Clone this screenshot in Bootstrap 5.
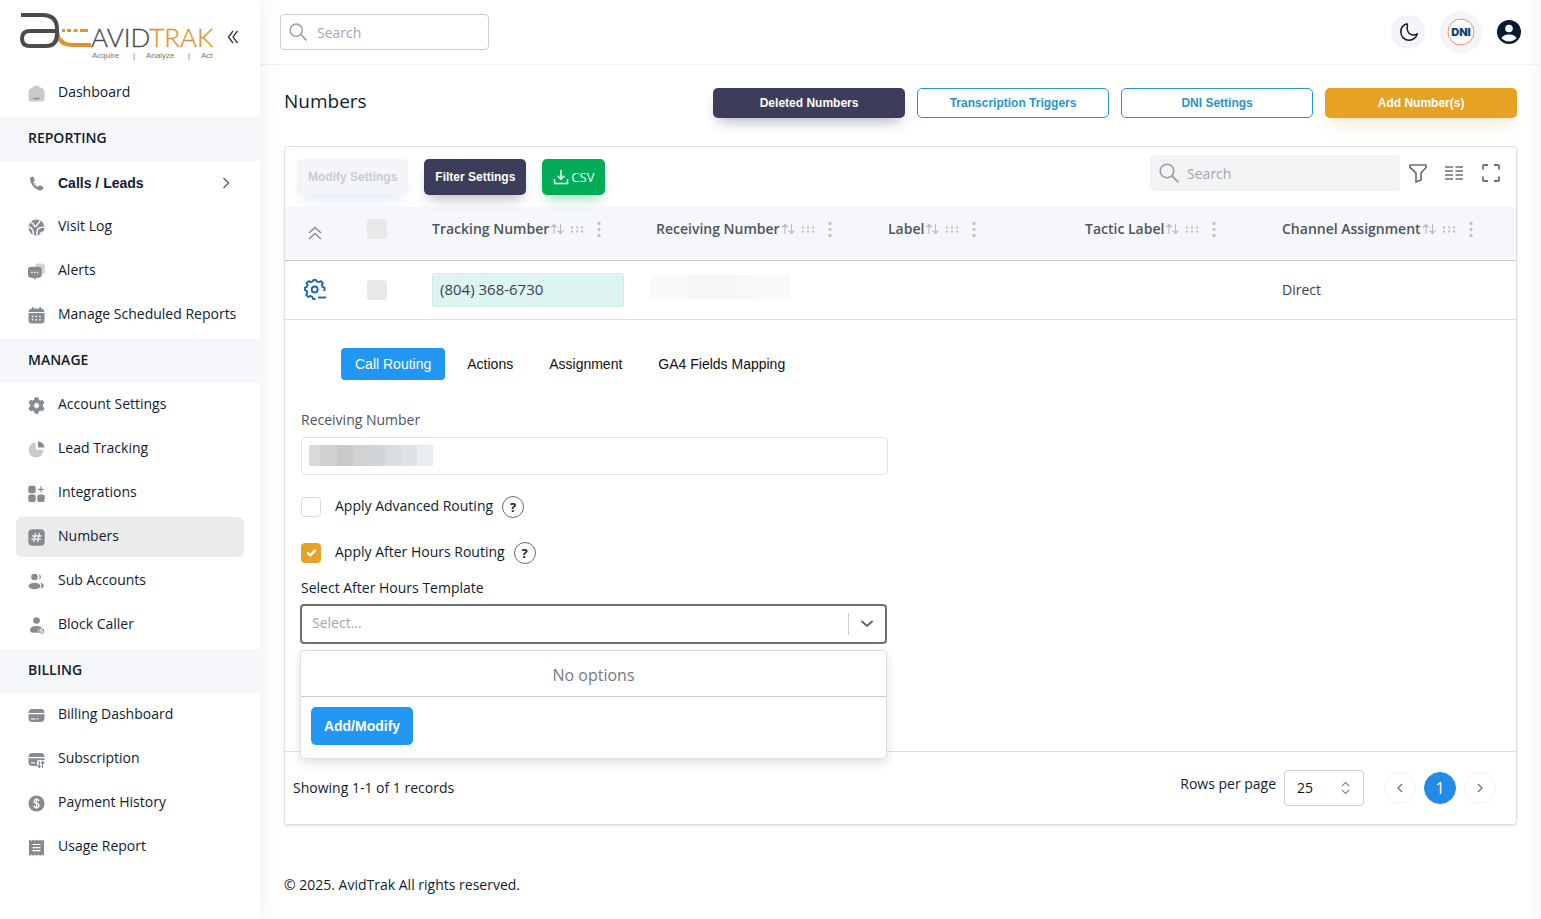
<!DOCTYPE html>
<html lang="en">
<head>
<meta charset="utf-8">
<meta name="viewport" content="width=device-width, initial-scale=1">
<title>AvidTrak - Numbers</title>
<link href="https://cdn.jsdelivr.net/npm/bootstrap@5.3.0/dist/css/bootstrap.min.css" rel="stylesheet">
<style>
  :root { --ui: "Open Sans", "Noto Sans", sans-serif; --arial: "Liberation Sans", Arial, sans-serif; --ink: #111c2d; --icon: #868b93; --amber: #e8a223; --navy: #3b3d5b; --blue: #2196f3; --line: #dcdee2; }
  body { font-family: var(--ui); font-size: 14px; line-height: 20px; color: var(--ink); background: #fff; }
  svg { display: block; flex: none; }
  .sidebar { width: 260px; box-shadow: 0 0 24px rgba(60, 60, 130, .09); z-index: 2; }
  .content-col { min-width: 0; box-shadow: inset -16px 0 16px -16px rgba(60, 60, 130, .09); }
  .brand-row { height: 71px; padding: 9px 20px 0 20px; }
  .collapse-btn { margin-top: 20px; }
  .side-title { height: 44px; padding: 0 28px 2px; background: #f6f7fb; font-size: 14px; font-weight: 600; display: flex; align-items: center; margin: 0; }
  .side-nav { padding-bottom: 2px; }
  .side-nav .nav-link { height: 40px; margin: 2px 16px; padding: 0 12px; color: var(--ink); border-radius: 6px; display: flex; align-items: center; gap: 13px; white-space: nowrap; }
  .side-nav .nav-link span { padding-bottom: 2px; }
  .side-nav .nav-link.active { background: #ebebeb; }
  .side-nav svg.ico { color: var(--icon); width: 17px; height: 17px; }
  .has-sub { font-family: var(--arial); font-weight: 700; }
  .topbar { height: 65px; border-bottom: 1px solid #f0f1f4; padding: 0 20px; }
  .top-tools { gap: 15px; }
  .search-wrap { position: relative; }
  .search-wrap svg { position: absolute; left: 9px; top: 50%; translate: 0 -50%; color: #9a9da3; }
  .form-control, .form-control:focus { font-size: 14px; line-height: 20px; box-shadow: none; }
  .form-control::placeholder { color: #a3a6ab; }
  .search-top { width: 209px; height: 36px; padding: 0 8px 0 36px; border-radius: 4px; border-color: #ccc; }
  .search-grid { width: 250px; height: 36px; padding: 0 8px 0 37px; border: 0; border-radius: 4px; background: #f1f3f5; }
  .round { border: 0; border-radius: 50%; background: #f5f5f9; display: flex; align-items: center; justify-content: center; padding: 0; color: var(--ink); width: 34px; height: 34px; }
  .round-lg { width: 42px; height: 42px; }
  .round-user { width: 24px; height: 24px; background: none; }
  .title-row { padding: 23px 0 28px; }
  .page-title { font-size: 19px; line-height: 26px; margin: 0; font-weight: 400; }
  .head-actions { gap: 12px; }
  .btn-a { --bs-btn-font-family: "Liberation Sans", Arial, sans-serif; font-size: 12px; font-weight: 700; line-height: 20px; padding: 0 10px; height: 36px; border-radius: 5px; }
  .btn-head { width: 192px; height: 30px; }
  .btn-navy, .btn-navy:hover { background: var(--navy); color: #fff; box-shadow: 0 8px 14px -5px rgba(59, 61, 91, .4); }
  .btn-line { border: 1px solid #2a93c9; color: #2a93c9; background: #fff; }
  .btn-amber { background: var(--amber); color: #fff; box-shadow: 0 10px 16px -5px rgba(232, 162, 35, .25); }
  .btn-green { background: #00ac55; color: #fff; font-size: 13px; font-weight: 500; gap: 2px; --bs-btn-font-family: "Open Sans", sans-serif; box-shadow: 0 8px 14px -5px rgba(0, 172, 85, .45); }
  .btn-pale, .btn-pale:disabled { background: #f3f5f8; color: #c9cdd3; border: 0; padding: 0 11px; opacity: 1; box-shadow: 0 10px 14px -5px rgba(33, 150, 243, .16); }
  .panel { border: 1px solid var(--line); border-radius: 4px; box-shadow: 0 1px 3px rgba(0, 0, 0, .1); background: #fff; }
  .toolbar { height: 60px; padding: 0 9px 0 12px; }
  .grid-tools { padding-bottom: 8px; }
  .tool { border: 0; background: none; padding: 9px; color: #6c7075; }
  .tool:last-child { padding-right: 6px; }
  .grid-table { table-layout: fixed; margin: 0; font-size: 14px; }
  .grid-table > :not(caption) > * > * { padding: 0 8px; vertical-align: middle; border-bottom: 1px solid #c6c8cd; }
  .grid-table > :not(caption) > * > .pick { padding: 0 15px 0 0; }
  .grid-table > thead > tr > th { height: 53px; background: #f6f7fa; padding-bottom: 9px; white-space: nowrap; }
  .grid-table > thead > tr > .pick { padding-bottom: 8px; }
  .grid-table > tbody > tr > td { height: 59px; border-bottom-color: var(--line); color: #3c424c; }
  .c-toggle { width: 60px; } .c-pick { width: 79px; } .c-track { width: 224px; } .c-recv { width: 232px; } .c-mid { width: 197px; }
  .th-line { display: flex; align-items: center; color: #babdc3; }
  .th-line b { font-weight: 600; color: #4d5560; }
  .form-check-input { width: 20px; height: 20px; margin: 0; border-radius: 4px; border: 1px solid #d8dadd; }
  .form-check-input:disabled { background: #e8e8e9; border: 0; opacity: 1; display: block; margin: 0 auto; }
  .form-check-input:checked { border-color: var(--amber); background-color: var(--amber); background-size: 16px; }
  .phone { width: 192px; height: 34px; font-size: 15px; line-height: 31px; padding: 0 7px; background: #def4f1; border: 1px solid #d0ebe7; border-radius: 3px; }
  .redact { display: flex; width: max-content; }
  .redact i { display: block; height: 24px; }
  .redact-cell { margin: -5px 0 0 -5px; }
  .detail { padding: 28px 16px 0; min-height: 432px; border-bottom: 1px solid var(--line); }
  .detail .nav { padding-left: 40px; gap: 8px; font-family: var(--arial); }
  .detail .nav-link { padding: 6px 14px; border-radius: 4px; color: #111; }
  .detail .nav-link.active { background: var(--blue); color: #fff; }
  .fields { max-width: 587px; }
  .recv-label { color: #4d5560; padding: 30px 0 7px; }
  .tpl-label { padding: 14px 0 6px; }
  .check-row { display: flex; align-items: center; margin-top: 24px; }
  .fake-input + .check-row { margin-top: 21px; }
  .check-row label { margin: 0 9px 0 14px; padding-bottom: 2px; }
  .fake-input { height: 38px; padding: 0 7px; border: 1px solid #e0e2e6; border-radius: 4px; position: relative; display: flex; align-items: center; }
  .fake-input input { position: absolute; inset: 0; width: 100%; border: 0; background: none; }
  .fake-input .redact i { height: 21px; }
  .help { width: 22px; height: 22px; border: 1px solid #6d6d6d; border-radius: 50%; background: #fff; padding: 0; font-size: 13px; line-height: 20px; font-weight: 700; color: #222; }
  .combo { height: 40px; border: 2px solid #6f7072; border-radius: 4px; margin: 0 1px 0 -1px; display: flex; align-items: center; position: relative; }
  .combo .form-control { border: 0; padding: 0 10px 2px; }
  .combo .sep { width: 1px; height: 22px; background: #ccc; flex: none; }
  .combo-arrow { border: 0; background: none; color: #666; padding: 0 11px; }
  .combo-menu { position: absolute; left: -2px; right: -2px; top: 44px; background: #fff; border: 1px solid var(--line); border-radius: 4px; box-shadow: 0 4px 11px rgba(0, 0, 0, .12); z-index: 3; }
  .combo-menu .none { height: 46px; padding-top: 12px; text-align: center; color: #777a80; border-bottom: 1px solid #c9cbce; font-size: 16px; line-height: 24px; }
  .btn-add, .btn-add:hover { background: var(--blue); color: #fff; font-size: 14px; width: 102px; height: 38px; padding: 0; margin: 10px 10px 13px; }
  .panel-foot { height: 72px; padding: 0 20px 0 8px; }
  .rows-select { width: 80px; height: 36px; padding: 0 12px; border: 1px solid #ccc; border-radius: 4px; appearance: none; color: #111; background: #fff url("data:image/svg+xml,%3Csvg xmlns='http://www.w3.org/2000/svg' width='9' height='14' fill='none' stroke='%23888' stroke-width='1.1'%3E%3Cpath d='M1 5l3.500-3.500L8 5M1 9l3.500 3.500L8 9'/%3E%3C/svg%3E") no-repeat right 13px center; }
  .pagination { gap: 8px; margin: 0 0 0 20px; }
  .pagination .page-item .page-link { width: 32px; height: 32px; border-radius: 50%; padding: 0; margin: 0; display: flex; align-items: center; justify-content: center; border: 1px solid #f0f0f0; color: #777; }
  .pagination .page-item.active .page-link { background: #228be6; color: #fff; border-color: #228be6; font-size: 16px; }
  .page-foot { padding-bottom: 24px; }
</style>
</head>
<body>
<svg width="0" height="0" class="position-absolute" aria-hidden="true">
  <symbol id="i-home" viewBox="0 0 17 17"><path fill="#c8cacf" d="M.5 6.500Q.5 5 2 4L7 .8Q8.500 0 10 .8L15 4q1.500 1 1.500 2.500V14a2.500 2.500 0 0 1-2.500 2.500H3A2.500 2.500 0 0 1 .5 14z"/><path fill="currentColor" d="M5.500 12.800h6v1.500h-6z"/></symbol>
  <symbol id="i-phone" viewBox="0 0 17 17"><path fill="currentColor" d="M2 3.500C2 2.500 3.500 1.300 4.600 1.500 6 2 7 5 6.500 6c-.5 1-1.200 1-1 1.700.5 1.500 2.200 3.300 3.800 3.900.8.200 1-.6 1.900-1.100 1.200-.5 4.200.9 4.300 2.200 0 1.300-1.500 2.600-3 2.700C8 15.600 2 9.500 2 3.500z"/><path fill="#c8cacf" d="M5.500 8c.8-1 2 0 2.500 1.500s2 2 1.300 2.300C7.500 11.500 5.500 9.500 5.500 8z"/></symbol>
  <symbol id="i-globe" viewBox="0 0 17 17"><circle cx="8.500" cy="8.500" r="8" fill="currentColor"/><path fill="none" stroke="#fff" stroke-width="1.400" d="M3 2.500c0 2 2.500 1.500 3 3.500s1.500 2 2.300.8S11 4.500 12 1.500M.5 8c2 0 3 1 4 3s.5 3 1 5.500M16.500 8.200c-3-.4-5 .2-6.500 1.800s0 2.500-1 3.500.5 2 0 3M12 16c0-2 .5-2.500 4-3"/></symbol>
  <symbol id="i-chat" viewBox="0 0 18 17"><path fill="#d3d5d9" d="M8 0h6.500A3.500 3.500 0 0 1 18 3.500V8a3.500 3.500 0 0 1-3.500 3.500H8z"/><path fill="currentColor" d="M3 3.500h8.500a3 3 0 0 1 3 3v5.500a3 3 0 0 1-3 3H9l-2 2-2-2H3a3 3 0 0 1-3-3V6.500a3 3 0 0 1 3-3z"/><path stroke="#fff" stroke-width="1.500" stroke-dasharray="1.500 1.500" d="M3.400 9.500h8"/></symbol>
  <symbol id="i-cal" viewBox="0 0 17 17"><path fill="currentColor" d="M4 0h1.500v1.500h6V0H13v1.600q3 .2 3.500 3.400H.500Q1 1.800 4 1.600zM.500 6h16v7a3.500 3.500 0 0 1-3.500 3.500H4A3.500 3.500 0 0 1 .500 13z"/><path stroke="#fff" stroke-width="1.500" stroke-dasharray="1.500 2.200" d="M3.800 9.500h9.500M3.800 12.800h9.500"/></symbol>
  <symbol id="i-gear" viewBox="0 0 17 17"><path fill="currentColor" stroke="currentColor" stroke-width=".8" stroke-linejoin="round" fill-rule="evenodd" d="M7 .7h3l.6 2.300 1.700 1 2.300-.7 1.500 2.700L14.500 7.500v2l1.600 1.700-1.500 2.700-2.300-.7-1.700 1-.6 2.100H7l-.6-2.100-1.700-1-2.300.7-1.500-2.700 1.600-1.700v-2L.9 6l1.500-2.700 2.300.7 1.700-1zM8.500 5.600a2.900 2.900 0 1 0 0 5.800 2.900 2.900 0 0 0 0-5.800z"/></symbol>
  <symbol id="i-pie" viewBox="0 0 17 17"><path fill="#c8cacf" d="M7.500 1.500v6.200q0 1.300 1.300 1.300H15.500a7.500 7.500 0 1 1-8-7.500z"/><path fill="currentColor" d="M10 .5a6.500 6.500 0 0 1 6.500 6H11q-1 0-1-1z"/></symbol>
  <symbol id="i-apps" viewBox="0 0 17 17"><g fill="currentColor"><rect x=".3" y=".8" width="7.400" height="7.400" rx="2"/><rect x=".3" y="9.600" width="7.400" height="7.400" rx="2"/><rect x="9.300" y="9.600" width="7.400" height="7.400" rx="2"/></g><path stroke="currentColor" stroke-width="1.200" d="M13 1.300v6M10 4.300h6"/></symbol>
  <symbol id="i-hash" viewBox="0 0 17 17"><rect x=".3" y=".3" width="16.400" height="16.400" rx="4" fill="currentColor"/><path stroke="#eee" stroke-width="1.300" d="M7.700 4L5.700 13M11.500 4l-2 9M4 7h9.500M3.500 10.200H13"/></symbol>
  <symbol id="i-users" viewBox="0 0 17 17"><g fill="currentColor"><circle cx="6.500" cy="4" r="3.300"/><ellipse cx="6.500" cy="13" rx="6" ry="3.300"/><path d="M11 1.300a2.700 2.700 0 0 1 0 5.200q1.300-2.600 0-5.200zM12.500 10c4.500.5 4.500 5 0 5.500q2-2.700 0-5.500z"/></g></symbol>
  <symbol id="i-block" viewBox="0 0 17 17"><g fill="currentColor"><circle cx="8.500" cy="3.500" r="3.300"/><path d="M8.500 9c3 0 5 1 5.700 1.800-3 0-4.700 2.500-3.600 5H5c-2 0-3-1.300-3-2.800C2 10.500 5 9 8.500 9z"/></g><circle cx="13.500" cy="14" r="2.300" fill="none" stroke="currentColor"/><path stroke="currentColor" d="M12 15.500l3-3"/></symbol>
  <symbol id="i-card" viewBox="0 0 17 17"><path fill="currentColor" d="M.5 6q0-4 4-4h8q4 0 4 4zM.5 7.200h16V11q0 4-4 4h-8q-4 0-4-4z"/><path stroke="#fff" stroke-width="1.200" d="M3 12h4.500M8.500 12h2"/></symbol>
  <symbol id="i-card2" viewBox="0 0 17 17"><path fill="currentColor" d="M.5 6q0-4 4-4h8q4 0 4 4zM.5 7.200h16V9H11q-2 0-2 2v4H4.500q-4 0-4-4z"/><path stroke="#fff" stroke-width="1.200" d="M3 12h4"/><path fill="none" stroke="currentColor" stroke-width="1.200" d="M11.300 10v6M9.500 14.500l1.800 2 1.200-1.500M14.500 17v-6M13 12.500l1.500-2 1.800 2"/></symbol>
  <symbol id="i-dollar" viewBox="0 0 17 17"><circle cx="8.500" cy="8.500" r="8" fill="currentColor"/><path fill="none" stroke="#fff" stroke-width="1.300" d="M11 6q-.3-1.500-2.500-1.500T6 6.300q0 1.700 2.500 2.100t2.500 2.200q0 1.900-2.500 1.900T6 10.800M8.500 3v11"/></symbol>
  <symbol id="i-receipt" viewBox="0 0 17 17"><path fill="currentColor" d="M1 1h1.500l1 1 1-1h1.500l1 1 1-1h1.500l1 1 1-1H13l1 1 1-1h1v15.500h-1l-1-1-1 1h-1.500l-1-1-1 1H8l-1-1-1 1H4.500l-1-1-1 1H1z"/><path stroke="#fff" stroke-width="1.200" d="M4.500 5.500h8M4.500 8.600h8M4.500 11.700h8"/></symbol>
  <symbol id="i-search" viewBox="0 0 20 20"><circle cx="8" cy="8" r="6.800" fill="none" stroke="currentColor" stroke-width="1.600"/><path stroke="currentColor" stroke-width="1.800" stroke-linecap="round" d="M13 13l6 5.800"/></symbol>
  <symbol id="i-cols" viewBox="0 0 48 16"><path fill="none" stroke="currentColor" stroke-width="1.200" d="M5 13V3.500M2 6.500l3-3 3 3M11.500 3v9.500M8.700 9.500l2.800 3 2.800-3"/><path stroke="currentColor" stroke-width="2" stroke-dasharray="2 3" d="M22 6.500h13M22 10.500h13"/></symbol>
  <symbol id="i-dots" viewBox="0 0 4 16"><g fill="currentColor"><circle cx="2" cy="2.500" r="1.600"/><circle cx="2" cy="8.500" r="1.600"/><circle cx="2" cy="14.400" r="1.600"/></g></symbol>
</svg>

<div class="d-flex min-vh-100">
  <aside class="sidebar flex-shrink-0 bg-white">
    <div class="brand-row d-flex align-items-start">
      <a href="#" aria-label="AvidTrak">
        <svg width="198" height="54" viewBox="20 9 198 54">
          <path fill="none" stroke="#e0942f" stroke-width="4" d="M57 31q1 14 16 14h18"/>
          <path stroke="#e0942f" stroke-width="3" d="M62 30.500h3M67 30.500h4M73.500 30.500h4M80 30.500h8"/>
          <path fill="none" stroke="#4b4b4d" stroke-width="4" d="M21 15H42Q57 15 57 29V34Q57 46 46 46H30Q22 46 22 38.500T30 31H57"/>
          <text x="91" y="47" font-family="Lato, sans-serif" font-weight="300" font-size="26" fill="#4b4b4d" stroke="#4b4b4d" stroke-width=".3">AVID<tspan fill="#e0942f" stroke="#e0942f">TRAK</tspan></text>
          <g font-family="Liberation Sans, sans-serif" font-size="8" fill="#777"><text x="92" y="58">Acquire</text><text x="133" y="58">|</text><text x="146" y="58">Analyze</text><text x="188" y="58">|</text><text x="201" y="58">Act</text></g>
        </svg>
      </a>
      <button class="btn p-0 border-0 ms-1 collapse-btn" type="button" aria-label="Collapse menu"><svg width="18" height="16" viewBox="0 0 18 16" fill="none" stroke="#333a45" stroke-width="1.300"><path d="M11 2L6.500 8l4.500 6M15.500 2L11 8l4.500 6"/></svg></button>
    </div>
    <nav class="side-nav nav flex-column flex-nowrap"><a class="nav-link" href="#"><svg class="ico"><use href="#i-home"/></svg><span>Dashboard</span></a></nav>
    <h2 class="side-title">REPORTING</h2>
    <nav class="side-nav nav flex-column flex-nowrap">
      <a class="nav-link has-sub" href="#"><svg class="ico"><use href="#i-phone"/></svg>Calls / Leads<svg class="ms-auto" width="12" height="12" viewBox="0 0 12 12" fill="none" stroke="#555b66" stroke-width="1.300"><path d="M3.500 1l5 5-5 5"/></svg></a>
      <a class="nav-link" href="#"><svg class="ico"><use href="#i-globe"/></svg><span>Visit Log</span></a>
      <a class="nav-link" href="#"><svg class="ico"><use href="#i-chat"/></svg><span>Alerts</span></a>
      <a class="nav-link" href="#"><svg class="ico"><use href="#i-cal"/></svg><span>Manage Scheduled Reports</span></a>
    </nav>
    <h2 class="side-title">MANAGE</h2>
    <nav class="side-nav nav flex-column flex-nowrap">
      <a class="nav-link" href="#"><svg class="ico"><use href="#i-gear"/></svg><span>Account Settings</span></a>
      <a class="nav-link" href="#"><svg class="ico"><use href="#i-pie"/></svg><span>Lead Tracking</span></a>
      <a class="nav-link" href="#"><svg class="ico"><use href="#i-apps"/></svg><span>Integrations</span></a>
      <a class="nav-link active" href="#" aria-current="page"><svg class="ico"><use href="#i-hash"/></svg><span>Numbers</span></a>
      <a class="nav-link" href="#"><svg class="ico"><use href="#i-users"/></svg><span>Sub Accounts</span></a>
      <a class="nav-link" href="#"><svg class="ico"><use href="#i-block"/></svg><span>Block Caller</span></a>
    </nav>
    <h2 class="side-title">BILLING</h2>
    <nav class="side-nav nav flex-column flex-nowrap">
      <a class="nav-link" href="#"><svg class="ico"><use href="#i-card"/></svg><span>Billing Dashboard</span></a>
      <a class="nav-link" href="#"><svg class="ico"><use href="#i-card2"/></svg><span>Subscription</span></a>
      <a class="nav-link" href="#"><svg class="ico"><use href="#i-dollar"/></svg><span>Payment History</span></a>
      <a class="nav-link" href="#"><svg class="ico"><use href="#i-receipt"/></svg><span>Usage Report</span></a>
    </nav>
  </aside>

  <div class="content-col flex-grow-1 d-flex flex-column">
    <header class="topbar d-flex align-items-center justify-content-between">
      <div class="search-wrap"><svg width="18" height="18"><use href="#i-search"/></svg><input class="form-control search-top" type="search" placeholder="Search" aria-label="Search"></div>
      <div class="top-tools d-flex align-items-center">
        <button class="round" type="button" aria-label="Dark mode"><svg width="20" height="20" viewBox="0 0 20 20" fill="none" stroke="currentColor" stroke-width="1.500" stroke-linejoin="round"><path d="M8 1.800C4.500 2.800 1.800 6 1.800 10a8.300 8.300 0 0 0 8.300 8.300c4 0 7.400-2.800 8.200-6.500-1 .8-2.300 1.300-3.700 1.300A6.300 6.300 0 0 1 8.200 6.800C8.200 4.500 8.800 3 8 1.800z" transform="translate(1 0)"/></svg></button>
        <button class="round round-lg" type="button" aria-label="DNI"><svg width="28" height="28" viewBox="0 0 28 28"><circle cx="14" cy="14" r="13" fill="#fff" stroke="#e8926a"/><text x="14" y="18" text-anchor="middle" font-family="Inter, sans-serif" font-weight="900" font-size="11" fill="#123f73">DNI</text></svg></button>
        <button class="round round-user" type="button" aria-label="Account"><svg width="24" height="24" viewBox="0 0 24 24"><circle cx="12" cy="12" r="12" fill="#0b1a33"/><circle cx="12" cy="8.500" r="3.800" fill="#fff"/><path fill="#fff" d="M4.500 18.500c1.500-5.500 13.500-5.500 15 0q-7.500 6-15 0z"/></svg></button>
      </div>
    </header>

    <main class="px-4 flex-grow-1">
      <div class="title-row d-flex align-items-start justify-content-between">
        <h1 class="page-title">Numbers</h1>
        <div class="head-actions d-flex">
          <button class="btn btn-a btn-head btn-navy" type="button">Deleted Numbers</button>
          <button class="btn btn-a btn-head btn-line" type="button">Transcription Triggers</button>
          <button class="btn btn-a btn-head btn-line" type="button">DNI Settings</button>
          <button class="btn btn-a btn-head btn-amber" type="button">Add Number(s)</button>
        </div>
      </div>

      <section class="panel">
        <div class="toolbar d-flex align-items-center justify-content-between">
          <div class="d-flex gap-3">
            <button class="btn btn-a btn-pale" type="button" disabled>Modify Settings</button>
            <button class="btn btn-a btn-navy" type="button">Filter Settings</button>
            <button class="btn btn-a btn-green d-flex align-items-center" type="button"><svg width="16" height="16" viewBox="0 0 16 16" fill="none" stroke="currentColor" stroke-width="1.500"><path d="M8 1v9M4.500 6.800L8 10.300l3.500-3.500M1.500 10v4.500h13V10"/></svg>CSV</button>
          </div>
          <div class="grid-tools d-flex align-items-center">
            <div class="search-wrap"><svg width="20" height="20"><use href="#i-search"/></svg><input class="form-control search-grid" type="search" placeholder="Search" aria-label="Search numbers"></div>
            <button class="tool" type="button" aria-label="Filters"><svg width="18" height="20" viewBox="0 0 18 20" fill="none" stroke="currentColor" stroke-width="1.700" stroke-linejoin="round"><path d="M1 2h16v2.500l-5 5.500V17l-5 2V10L1 4.500z"/></svg></button>
            <button class="tool" type="button" aria-label="Density"><svg width="18" height="16" viewBox="0 0 18 16" stroke="currentColor" stroke-width="1.600"><path d="M0 2h8M10.500 2h7.500M0 6h8M10.500 6h7.500M0 10h8M10.500 10h7.500M0 14h8M10.500 14h7.500"/></svg></button>
            <button class="tool" type="button" aria-label="Full screen"><svg width="20" height="20" viewBox="0 0 20 20" fill="none" stroke="currentColor" stroke-width="1.800"><path d="M2 6.500V3q0-1 1-1h4M13 2h4q1 0 1 1v3.500M18 13.500V17q0 1-1 1h-4M7 18H3q-1 0-1-1v-3.500"/></svg></button>
          </div>
        </div>

        <table class="table grid-table">
          <colgroup><col class="c-toggle"><col class="c-pick"><col class="c-track"><col class="c-recv"><col class="c-mid"><col class="c-mid"><col></colgroup>
          <thead>
            <tr>
              <th><svg class="mx-auto mt-2" width="14" height="14" viewBox="0 0 14 14" fill="none" stroke="#888c92" stroke-width="1.500"><path d="M1 7l6-5.500L13 7M1 13l6-5.500 6 5.500"/></svg></th>
              <th class="pick"><input class="form-check-input" type="checkbox" disabled aria-label="Select all"></th>
              <th><span class="th-line"><b>Tracking Number</b><svg width="48" height="16"><use href="#i-cols"/></svg><svg width="4" height="16"><use href="#i-dots"/></svg></span></th>
              <th><span class="th-line"><b>Receiving Number</b><svg width="48" height="16"><use href="#i-cols"/></svg><svg width="4" height="16"><use href="#i-dots"/></svg></span></th>
              <th><span class="th-line"><b>Label</b><svg width="48" height="16"><use href="#i-cols"/></svg><svg width="4" height="16"><use href="#i-dots"/></svg></span></th>
              <th><span class="th-line"><b>Tactic Label</b><svg width="48" height="16"><use href="#i-cols"/></svg><svg width="4" height="16"><use href="#i-dots"/></svg></span></th>
              <th><span class="th-line"><b>Channel Assignment</b><svg width="48" height="16"><use href="#i-cols"/></svg><svg width="4" height="16"><use href="#i-dots"/></svg></span></th>
            </tr>
          </thead>
          <tbody>
            <tr>
              <td><svg class="mx-auto" width="22" height="22" viewBox="0 0 22 22" fill="none" stroke="#1769b5" stroke-width="1.900"><path stroke-linejoin="round" d="M11.500 20H9l-.7-2.200-2-.9-2.200 1.100-2-2.300 1.200-2-.7-1.800L.9 11V8.700l2-.8.700-1.900-1-2.100 2.100-1.800 2 1 1.900-.7L9.500 1H12l.8 1.400 2 .7 2-1 2 1.900-1 2 .7 1.900 2 .8V11l-1.200.8"/><circle cx="10.700" cy="10.500" r="3"/><path d="M14 18.500h8"/></svg></td>
              <td class="pick"><input class="form-check-input" type="checkbox" disabled aria-label="Select row"></td>
              <td><div class="phone">(804) 368-6730</div></td>
              <td><div class="redact redact-cell"><i style="width:38px;background:#fafafa"></i><i style="width:46px;background:#f6f6f6"></i><i style="width:20px;background:#f8f8f8"></i><i style="width:35px;background:#f8f9f9"></i></div></td>
              <td></td><td></td>
              <td>Direct</td>
            </tr>
          </tbody>
        </table>

        <div class="detail">
          <ul class="nav nav-pills">
            <li class="nav-item"><a class="nav-link active" href="#">Call Routing</a></li>
            <li class="nav-item"><a class="nav-link" href="#">Actions</a></li>
            <li class="nav-item"><a class="nav-link" href="#">Assignment</a></li>
            <li class="nav-item"><a class="nav-link" href="#">GA4 Fields Mapping</a></li>
          </ul>
          <div class="fields">
            <label for="recv" class="recv-label d-block">Receiving Number</label>
            <div class="fake-input">
              <div class="redact"><i style="width:11px;background:#d9dadc"></i><i style="width:17px;background:#cfd0d2"></i><i style="width:16px;background:#c9cacc"></i><i style="width:17px;background:#d0d2d4"></i><i style="width:15px;background:#d1d5da"></i><i style="width:16px;background:#d9dde2"></i><i style="width:16px;background:#dfe2e6"></i><i style="width:16px;background:#e9edf2"></i></div>
              <input id="recv" type="text">
            </div>
            <div class="check-row"><input class="form-check-input" type="checkbox" id="adv"><label for="adv">Apply Advanced Routing</label><button class="help" type="button">?</button></div>
            <div class="check-row"><input class="form-check-input" type="checkbox" id="aft" checked><label for="aft">Apply After Hours Routing</label><button class="help" type="button">?</button></div>
            <label for="tpl" class="tpl-label d-block">Select After Hours Template</label>
            <div class="combo">
              <input class="form-control" id="tpl" type="text" role="combobox" aria-expanded="true" aria-controls="tplMenu" placeholder="Select...">
              <span class="sep"></span>
              <button class="combo-arrow" type="button" aria-label="Open list"><svg width="14" height="10" viewBox="0 0 14 10" fill="none" stroke="currentColor" stroke-width="2" stroke-linecap="round"><path d="M2 2.500l5 4.500 5-4.500"/></svg></button>
              <div class="combo-menu" id="tplMenu">
                <div class="none">No options</div>
                <button class="btn btn-a btn-add" type="button">Add/Modify</button>
              </div>
            </div>
          </div>
        </div>

        <div class="panel-foot d-flex align-items-center justify-content-between">
          <span>Showing 1-1 of 1 records</span>
          <div class="d-flex align-items-center">
            <label for="rows" class="me-2 pb-2">Rows per page</label>
            <select id="rows" class="rows-select"><option>25</option></select>
            <ul class="pagination">
              <li class="page-item"><a class="page-link" href="#" aria-label="Previous"><svg width="8" height="10" viewBox="0 0 8 10" fill="none" stroke="currentColor" stroke-width="1.400"><path d="M6 1L2 5l4 4"/></svg></a></li>
              <li class="page-item active"><a class="page-link" href="#">1</a></li>
              <li class="page-item"><a class="page-link" href="#" aria-label="Next"><svg width="8" height="10" viewBox="0 0 8 10" fill="none" stroke="currentColor" stroke-width="1.400"><path d="M2 1l4 4-4 4"/></svg></a></li>
            </ul>
          </div>
        </div>
      </section>
    </main>
    <footer class="page-foot px-4">© 2025. AvidTrak All rights reserved.</footer>
  </div>
</div>
<script src="https://cdn.jsdelivr.net/npm/bootstrap@5.3.0/dist/js/bootstrap.bundle.min.js"></script>
</body>
</html>
